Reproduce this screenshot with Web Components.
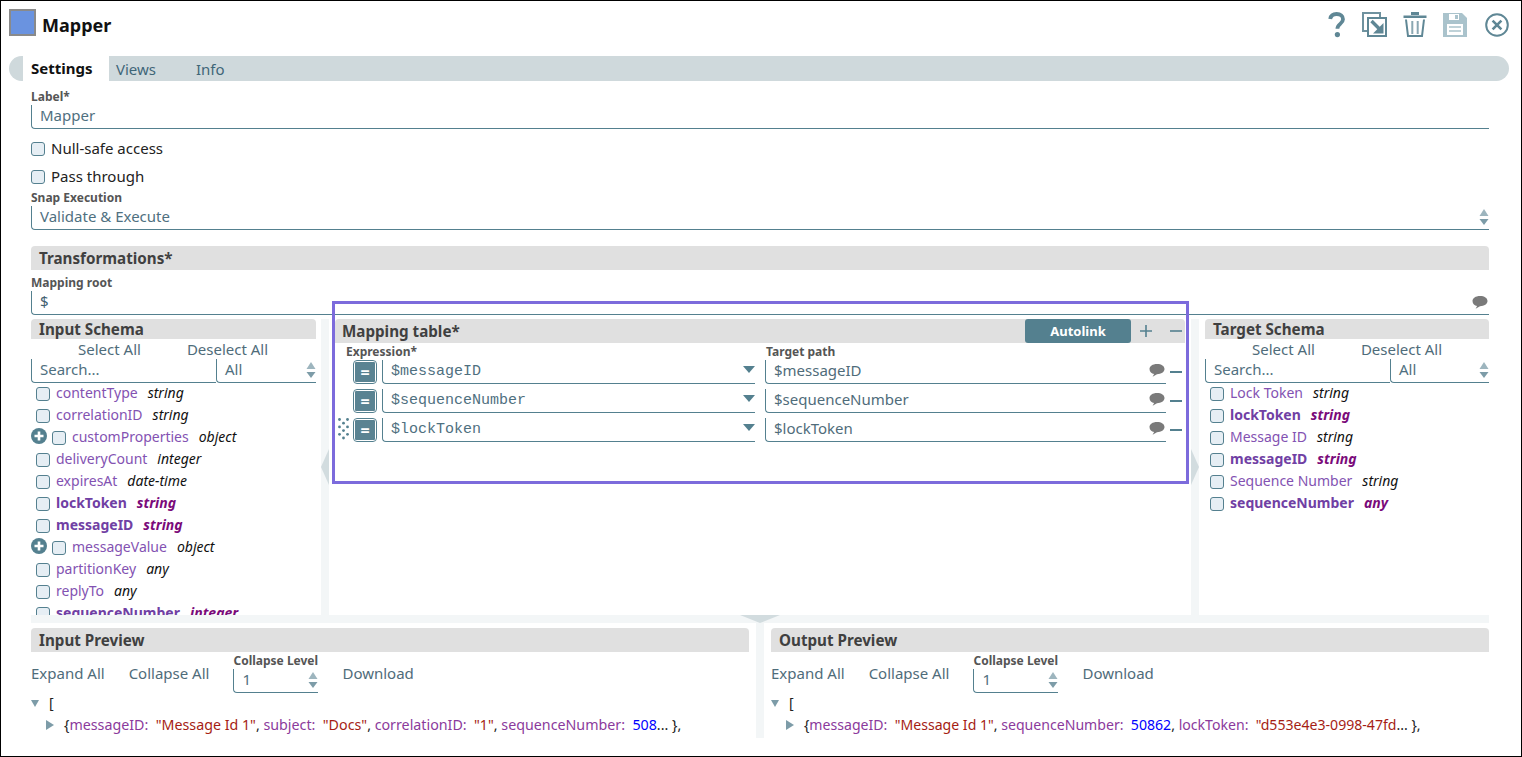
<!DOCTYPE html>
<html>
<head>
<meta charset="utf-8">
<title>Mapper</title>
<style>
  html, body { margin: 0; padding: 0; background: #fff; }
  body { font-family: "Noto Sans", sans-serif; }
</style>
</head>
<body>
<snap-app></snap-app>

<script>
// small helper, every element below just hands its html to this
class Base extends HTMLElement {
  constructor() {
    super();
    this.attachShadow({ mode: "open" });
  }
  attr(name, fallback = "") {
    return this.hasAttribute(name) ? this.getAttribute(name) : fallback;
  }
  render(html) {
    this.shadowRoot.innerHTML = html;
  }
}

const bubble = `<svg width="16" height="13" viewBox="0 0 16 13" style="margin-top:2px"><path d="M8 0C3.6 0 .5 2.2.5 5s2.2 4.6 4.6 5L3.6 12.8 8 10.2c4.2 0 7.5-2.2 7.5-5.2S12.4 0 8 0z" fill="#7a7a7a"/></svg>`;
const stepper = `<svg width="10" height="17" viewBox="0 0 10 17" style="margin-top:4px"><path d="M5 0l4.5 7h-9z" fill="#9db5be"/><path d="M.5 10h9L5 16z" fill="#7d9ca8"/></svg>`;

class SnapField extends Base {
  connectedCallback() {
    const mono = this.hasAttribute("mono");
    this.render(`
      <style>
        :host { display: block; }
        .cap { font: 700 12px/14px "Noto Sans", sans-serif; color: #555; height: 14px; margin-bottom: 1px; white-space: nowrap; }
        .box { display: flex; align-items: center; height: 24px; box-sizing: border-box; padding: 0 0 ${mono ? 0 : 4}px 8px;
               border-left: 1px solid #54808f; border-bottom: 1px solid #54808f; border-bottom-left-radius: 4px; }
        .val { flex: 1; font: ${mono ? '15px "Liberation Mono"' : '15px "Noto Sans"'}, sans-serif; color: ${this.attr("color", "#4f7080")}; white-space: nowrap; }
        .end { display: flex; align-items: center; }
      </style>
      ${this.hasAttribute("label") ? `<div class="cap">${this.attr("label")}</div>` : ""}
      <div class="box"><span class="val">${this.attr("value")}</span><span class="end"><slot></slot></span></div>
    `);
  }
}

class CheckRow extends Base {
  connectedCallback() {
    this.render(`
      <style>
        :host { display: flex; align-items: center; height: 14px; font: 15px "Noto Sans", sans-serif; color: #222; }
        i { width: 14px; height: 14px; box-sizing: border-box; background: #e6eef4; border: 1px solid #54808f; border-radius: 3px; margin-right: 6px; }
        span { margin-top: -2px; }
      </style>
      <i></i><span><slot></slot></span>
    `);
  }
}

class SectionBar extends Base {
  connectedCallback() {
    this.render(`
      <style>
        :host { display: flex; align-items: center; height: var(--bar-h, 24px); padding-left: var(--bar-pad, 8px); background: #e0e0e0;
                border-radius: 4px 4px 0 0; font: 700 15.2px "Noto Sans", sans-serif; color: #404040; white-space: nowrap; }
        .t { flex: 1; }
      </style>
      <span class="t">${this.attr("title")}</span><slot></slot>
    `);
  }
}

class SchemaRow extends Base {
  connectedCallback() {
    const strong = this.hasAttribute("strong");
    const tree = this.hasAttribute("tree");
    this.render(`
      <style>
        :host { display: flex; align-items: center; height: 22px; padding-left: ${tree ? 0 : 5}px; font: 14px "Noto Sans", sans-serif; white-space: nowrap; }
        svg { margin-right: 5px; }
        i { width: 14px; height: 14px; box-sizing: border-box; background: #e6eef4; border: 1px solid #54808f; border-radius: 3px; margin: 4px 6px 0 0; flex: none; }
        b { font-weight: ${strong ? 700 : 400}; color: ${strong ? "#7040a4" : "#8352b2"}; margin-right: 10px; }
        em { font-weight: ${strong ? 700 : 400}; color: ${strong ? "#7a0a7a" : "#111"}; }
      </style>
      ${tree ? `<svg width="16" height="16" viewBox="0 0 16 16"><circle cx="8" cy="8" r="8" fill="#54808f"/><path d="M8 3.5v9M3.5 8h9" stroke="#fff" stroke-width="2.6"/></svg>` : ""}
      <i></i><b>${this.attr("name")}</b><em>${this.attr("type")}</em>
    `);
  }
}

class SchemaPanel extends Base {
  connectedCallback() {
    this.render(`
      <style>
        :host { display: block; overflow: hidden; height: 296px; font-family: "Noto Sans", sans-serif; }
        section-bar { --bar-h: 20px; }
        .links { display: flex; gap: 46px; height: 20px; padding-left: 47px; align-items: center; font-size: 15px; color: #4f6c7a; }
        .search { display: flex; margin-bottom: -2px; }
        .search snap-field:first-child { width: 185px; }
        .search snap-field:last-child { flex: 1; }
      </style>
      <section-bar title="${this.attr("title")}"></section-bar>
      <div class="links"><span>Select All</span><span>Deselect All</span></div>
      <div class="search">
        <snap-field value="Search..."></snap-field>
        <snap-field value="All">${stepper}</snap-field>
      </div>
      <slot></slot>
    `);
  }
}

class MapRow extends Base {
  connectedCallback() {
    // staggered dots of the drag handle
    const dots = [];
    for (let r = 0; r < 6; r++) {
      const xs = r % 2 ? [5.5] : [1.5, 9.5];
      xs.forEach(x => dots.push(`<circle cx="${x}" cy="${1.5 + r * 3.7}" r="1.4" fill="#54808f"/>`));
    }
    this.render(`
      <style>
        :host { display: flex; height: 24px; margin-bottom: 5px; }
        .grip { width: 18px; padding-left: 3px; box-sizing: border-box; flex: none; }
        .eq { width: 24px; height: 24px; box-sizing: border-box; border: 1px solid #54808f; border-radius: 4px; padding: 1px; flex: none; margin-right: 5px; }
        .eq div { height: 100%; background: #5a8392; border-radius: 1px; color: #fff; font: 700 16px/20px "Noto Sans", sans-serif; text-align: center; }
        .exp { width: 373px; margin-right: 10px; flex: none; }
        .tgt { width: 401px; flex: none; }
        .tgt svg { margin-right: 1px; }
        .minus { width: 12px; height: 2px; background: #54808f; margin: 11px 0 0 4px; }
      </style>
      <div class="grip">${this.hasAttribute("grip") ? `<svg width="13" height="22" viewBox="0 0 13 22">${dots.join("")}</svg>` : ""}</div>
      <div class="eq"><div>=</div></div>
      <snap-field class="exp" mono value="${this.attr("path")}" color="#4f7080"><svg width="12" height="8" viewBox="0 0 12 8" style="margin-bottom:3px"><path d="M0 0h12L6 7z" fill="#54808f"/></svg></snap-field>
      <snap-field class="tgt" value="${this.attr("path")}" color="#4f6c7a">${bubble}</snap-field>
      <div class="minus"></div>
    `);
  }
}

class MappingTable extends Base {
  connectedCallback() {
    this.render(`
      <style>
        :host { display: block; font-family: "Noto Sans", sans-serif; }
        section-bar { --bar-pad: 7px; }
        .btn { width: 106px; height: 24px; background: #54808f; color: #fff; border-radius: 3px; font: 700 13px/24px "Noto Sans", sans-serif; text-align: center; }
        .ctl { display: flex; align-items: center; justify-content: center; width: 30px; height: 24px; box-sizing: border-box; }
        .last { width: 24px; padding-left: 6px; }
        .caps { display: flex; height: 17px; font: 700 12px/18px "Noto Sans", sans-serif; color: #555; }
        .caps span:first-child { width: 431px; padding-left: 11px; box-sizing: border-box; }
      </style>
      <section-bar title="Mapping table*">
        <div class="btn">Autolink</div>
        <div class="ctl"><svg width="12" height="12" viewBox="0 0 12 12"><path d="M6 0v12M0 6h12" stroke="#54808f" stroke-width="1.6"/></svg></div>
        <div class="ctl last"><svg width="12" height="12" viewBox="0 0 12 12"><path d="M0 6h12" stroke="#54808f" stroke-width="1.6"/></svg></div>
      </section-bar>
      <div class="caps"><span>Expression*</span><span>Target path</span></div>
      <slot></slot>
    `);
  }
}

class SplitBar extends Base {
  connectedCallback() {
    const dir = this.attr("dir");
    const shape = dir === "left" ? `<svg width="8" height="36" viewBox="0 0 8 36"><path d="M8 0v36L0 18z" fill="#d2dcdf"/></svg>`
      : dir === "right" ? `<svg width="8" height="36" viewBox="0 0 8 36"><path d="M0 0v36l8-18z" fill="#d2dcdf"/></svg>`
      : dir === "down" ? `<svg width="40" height="8" viewBox="0 0 40 8"><path d="M0 0h40L20 8z" fill="#d2dcdf"/></svg>` : "";
    this.render(`
      <style>
        :host { display: flex; align-items: center; justify-content: center; background: #f3f6f7; flex: none; }
        svg { display: block; }
      </style>
      ${shape}
    `);
  }
}

class PreviewPanel extends Base {
  connectedCallback() {
    this.render(`
      <style>
        :host { display: block; height: 110px; overflow: hidden; font-family: "Noto Sans", sans-serif; }
        .tools { display: flex; height: 39px; font-size: 15px; color: #4f6c7a; }
        .tools > span { margin-top: 11px; white-space: nowrap; }
        .lvl { width: 85px; margin: 2px 24px 0 24px; flex: none; }
        .tree { font-size: 14.1px; }
        .line { display: flex; align-items: center; height: 22px; white-space: nowrap; color: #222; }
        .tri { margin-right: 10px; flex: none; position: relative; top: 1px; }
        .two { padding-left: 15px; }
      </style>
      <section-bar title="${this.attr("title")}"></section-bar>
      <div class="tools">
        <span>Expand All</span><span style="margin-left:24px">Collapse All</span>
        <snap-field class="lvl" label="Collapse Level" value="1">${stepper}</snap-field>
        <span>Download</span>
      </div>
      <div class="tree">
        <div class="line"><svg class="tri" width="8" height="8" viewBox="0 0 8 8"><path d="M0 1h8L4 8z" fill="#7d9ca8"/></svg>[</div>
        <div class="line two"><svg class="tri" width="8" height="10" viewBox="0 0 8 10"><path d="M0 0l8 5-8 5z" fill="#7d9ca8"/></svg><slot></slot></div>
      </div>
    `);
  }
}

class JsonLine extends Base {
  connectedCallback() {
    // pairs come in as key=value|key=value, value type is picked from the quotes
    const parts = this.attr("pairs").split("|").map(p => {
      const [k, v] = p.split("=");
      const isNum = !v.startsWith('"');
      return `<span class="k">${k}:</span>&nbsp;&nbsp;<span class="${isNum ? "n" : "s"}">${v}</span>`;
    });
    this.render(`
      <style>
        :host { display: inline; font: ${this.attr("size", "14.1")}px "Noto Sans", sans-serif; color: #222; white-space: nowrap; }
        .k { color: #8b3a9c; }
        .s { color: #a51d14; }
        .n { color: #0000ff; }
      </style>
      {${parts.join(", ")}... },
    `);
  }
}

class SnapHeader extends Base {
  connectedCallback() {
    this.render(`
      <style>
        :host { display: flex; align-items: center; height: 55px; box-sizing: border-box; padding: 0 12px 8px 8px; }
        .logo { width: 27px; height: 27px; box-sizing: border-box; background: #6a93e0; border: 2px solid #8a8a8a; margin: 0 6px 4px 0; }
        h1 { flex: 1; margin: 0; font: 700 18px "Noto Sans", sans-serif; color: #111; }
        .icons { display: flex; align-items: center; }
        svg { display: block; }
      </style>
      <div class="logo"></div>
      <h1>Mapper</h1>
      <div class="icons">
        <svg width="18" height="26" viewBox="0 0 18 26" style="margin-right:16px"><path d="M2.2 7C2.8 3.6 5.2 2 8.6 2c4 0 6.4 2 6.4 5.2 0 4.8-5.6 4.6-5.6 9.6" fill="none" stroke="#5f8795" stroke-width="3.8"/><circle cx="9.4" cy="22.6" r="2.6" fill="#5f8795"/></svg>
        <svg width="25" height="25" viewBox="0 0 25 25" style="margin-right:16px"><path d="M18 5V1H1v18h4" fill="none" stroke="#6f929f" stroke-width="2"/><rect x="6" y="6" width="18" height="18" fill="#fff" stroke="#5f8795" stroke-width="2"/><path d="M21.5 11v10.500h-10.500z" fill="#5f8795"/><path d="M9.500 9l8 8" stroke="#5f8795" stroke-width="3.400"/></svg>
        <svg width="24" height="25" viewBox="0 0 24 25" style="margin-right:16px"><path d="M8 0h8v3H8z" fill="#5f8795"/><path d="M0.500 3.500h23v2.500h-23z" fill="#5f8795"/><path d="M3 7.500l2 16.500h14l2-16.500" fill="none" stroke="#5f8795" stroke-width="2"/><path d="M9.300 9v13M14.700 9v13" stroke="#8aa7b2" stroke-width="2"/></svg>
        <svg width="24" height="24" viewBox="0 0 24 24" style="margin-right:18px"><path d="M0 0h19l5 5v19H0z" fill="#aac3cc"/><path d="M6 1h10v6H6z" fill="#fff"/><path d="M12 2h3v4h-3z" fill="#aac3cc"/><path d="M4 11h16v11H4z" fill="#fff"/><path d="M6 14h12M6 18h12" stroke="#aac3cc" stroke-width="1.6"/></svg>
        <svg width="24" height="24" viewBox="0 0 24 24"><circle cx="12" cy="12" r="10.8" fill="none" stroke="#5f8795" stroke-width="2"/><path d="M7.6 7.6l8.8 8.8M16.4 7.6l-8.8 8.8" stroke="#5f8795" stroke-width="2.6"/></svg>
      </div>
    `);
  }
}

class SnapTabs extends Base {
  connectedCallback() {
    this.render(`
      <style>
        :host { display: flex; align-items: center; width: 1500px; height: 25px; margin-left: 8px; background: #cfd9dc; border-radius: 12.5px;
                font: 15px "Noto Sans", sans-serif; color: #3f6678; }
        .on { width: 86px; height: 25px; margin-left: 14px; padding-left: 8px; box-sizing: border-box; background: #fff; font-weight: 700; color: #111; line-height: 25px; }
        .v { margin-left: 7px; width: 80px; }
      </style>
      <div class="on">Settings</div><div class="v">Views</div><div>Info</div>
    `);
  }
}

class SnapApp extends Base {
  connectedCallback() {
    this.render(`
      <style>
        :host { display: block; position: relative; width: 1522px; height: 757px; box-sizing: border-box; border: 1px solid #000; overflow: hidden;
                font-family: "Noto Sans", sans-serif; }
        .body { width: 1458px; margin-left: 30px; }
        .cols { display: flex; margin-top: 4px; height: 296px; }
        .cols schema-panel:first-child { width: 285px; flex: none; }
        .cols schema-panel:last-child { flex: 1; }
        .v { width: 8px; }
        .map { width: 850px; flex: none; margin: 0 6px; }
        .h { height: 8px; }
        .prev { display: flex; margin-top: 5px; }
        .prev preview-panel { width: 718px; flex: none; }
        .pv { width: 8px; height: 115px; margin: -5px 7px 0; }
        .mark { position: absolute; left: 331px; top: 300px; width: 857px; height: 183px; box-sizing: border-box; border: 3px solid #7c6bdc; pointer-events: none; }
      </style>
      <snap-header></snap-header>
      <snap-tabs></snap-tabs>
      <div class="body">
        <snap-field style="margin-top:9px" label="Label*" value="Mapper"></snap-field>
        <check-row style="margin-top:13px">Null-safe access</check-row>
        <check-row style="margin-top:14px">Pass through</check-row>
        <snap-field style="margin-top:7px" label="Snap Execution" value="Validate &amp; Execute">${stepper}</snap-field>
        <section-bar style="margin-top:16px" title="Transformations*"></section-bar>
        <snap-field style="margin-top:6px" label="Mapping root" value="$" color="#3f6070"><span style="display:flex;margin:2px 1px 0 0">${bubble}</span></snap-field>

        <div class="cols">
          <schema-panel title="Input Schema">
            <schema-row name="contentType" type="string"></schema-row>
            <schema-row name="correlationID" type="string"></schema-row>
            <schema-row tree name="customProperties" type="object"></schema-row>
            <schema-row name="deliveryCount" type="integer"></schema-row>
            <schema-row name="expiresAt" type="date-time"></schema-row>
            <schema-row strong name="lockToken" type="string"></schema-row>
            <schema-row strong name="messageID" type="string"></schema-row>
            <schema-row tree name="messageValue" type="object"></schema-row>
            <schema-row name="partitionKey" type="any"></schema-row>
            <schema-row name="replyTo" type="any"></schema-row>
            <schema-row strong name="sequenceNumber" type="integer"></schema-row>
          </schema-panel>
          <split-bar class="v" dir="left" style="margin-left:5px"></split-bar>
          <mapping-table class="map">
            <map-row path="$messageID"></map-row>
            <map-row path="$sequenceNumber"></map-row>
            <map-row grip path="$lockToken"></map-row>
          </mapping-table>
          <split-bar class="v" dir="right" style="margin-right:6px"></split-bar>
          <schema-panel title="Target Schema">
            <schema-row name="Lock Token" type="string"></schema-row>
            <schema-row strong name="lockToken" type="string"></schema-row>
            <schema-row name="Message ID" type="string"></schema-row>
            <schema-row strong name="messageID" type="string"></schema-row>
            <schema-row name="Sequence Number" type="string"></schema-row>
            <schema-row strong name="sequenceNumber" type="any"></schema-row>
          </schema-panel>
        </div>

        <split-bar class="h" dir="down"></split-bar>

        <div class="prev">
          <preview-panel title="Input Preview"><json-line size="14.25" pairs='messageID="Message Id 1"|subject="Docs"|correlationID="1"|sequenceNumber=508'></json-line></preview-panel>
          <split-bar class="pv"></split-bar>
          <preview-panel title="Output Preview"><json-line pairs='messageID="Message Id 1"|sequenceNumber=50862|lockToken="d553e4e3-0998-47fd'></json-line></preview-panel>
        </div>
      </div>
      <div class="mark"></div>
    `);
  }
}

customElements.define("snap-field", SnapField);
customElements.define("check-row", CheckRow);
customElements.define("section-bar", SectionBar);
customElements.define("schema-row", SchemaRow);
customElements.define("schema-panel", SchemaPanel);
customElements.define("map-row", MapRow);
customElements.define("mapping-table", MappingTable);
customElements.define("split-bar", SplitBar);
customElements.define("preview-panel", PreviewPanel);
customElements.define("json-line", JsonLine);
customElements.define("snap-header", SnapHeader);
customElements.define("snap-tabs", SnapTabs);
customElements.define("snap-app", SnapApp);
</script>
</body>
</html>
